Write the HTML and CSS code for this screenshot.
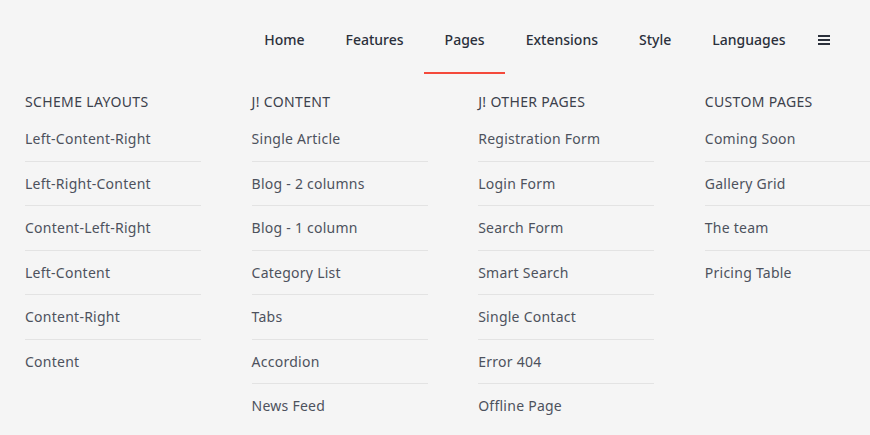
FILE: index.html
```html
<!DOCTYPE html>
<html lang="en">
<head>
    <meta charset="UTF-8">
    <title>Pages menu</title>
    <link rel="stylesheet" href="styles.css">
</head>
<body>
    <!-- barra de navegação -->
    <header class="topbar">
        <nav class="nav">
            <a href="#">Home</a>
            <a href="#">Features</a>
            <a href="#" class="active">Pages</a>
            <a href="#">Extensions</a>
            <a href="#">Style</a>
            <a href="#">Languages</a>
            <span class="burger"><i></i><i></i><i></i></span>
        </nav>
    </header>

    <!-- mega menu -->
    <div class="mega">
        <div class="col">
            <h4>Scheme Layouts</h4>
            <a href="#">Left-Content-Right</a>
            <a href="#">Left-Right-Content</a>
            <a href="#">Content-Left-Right</a>
            <a href="#">Left-Content</a>
            <a href="#">Content-Right</a>
            <a href="#">Content</a>
        </div>
        <div class="col">
            <h4>J! Content</h4>
            <a href="#">Single Article</a>
            <a href="#">Blog - 2 columns</a>
            <a href="#">Blog - 1 column</a>
            <a href="#">Category List</a>
            <a href="#">Tabs</a>
            <a href="#">Accordion</a>
            <a href="#">News Feed</a>
        </div>
        <div class="col">
            <h4>J! Other Pages</h4>
            <a href="#">Registration Form</a>
            <a href="#">Login Form</a>
            <a href="#">Search Form</a>
            <a href="#">Smart Search</a>
            <a href="#">Single Contact</a>
            <a href="#">Error 404</a>
            <a href="#">Offline Page</a>
        </div>
        <div class="col">
            <h4>Custom Pages</h4>
            <a href="#">Coming Soon</a>
            <a href="#">Gallery Grid</a>
            <a href="#">The team</a>
            <a href="#">Pricing Table</a>
        </div>
    </div>
</body>
</html>
```
FILE: styles.css
```css
/* base */
body { margin: 0; background: #f5f5f5; font-family: "Noto Sans", "Open Sans", sans-serif; color: #4d525d; overflow: hidden; }
a { text-decoration: none; color: inherit; }

/* nav */
.topbar { height: 80px; display: flex; justify-content: flex-end; padding-right: 40px; }
.nav { display: flex; align-items: stretch; height: 74px; }
.nav a { display: flex; align-items: center; padding: 6px 20.5px 0; font-size: 14px; font-weight: 500; color: #2b303b; border-bottom: 2px solid transparent; }
.nav a.active { border-bottom-color: #f4493b; }
.burger { display: flex; flex-direction: column; justify-content: center; gap: 2px; margin-left: 12px; padding-top: 6px; }
.burger i { display: block; width: 12px; height: 2px; background: #2b303b; }

/* mega menu */
.mega { display: grid; grid-template-columns: repeat(4, 176px); column-gap: 50.6px; padding: 10px 0 0 25px; }
.col h4 { margin: 0; height: 27px; font-size: 14px; font-weight: 400; text-transform: uppercase; color: #3c414c; line-height: 24px; letter-spacing: 0.35px; }
.col a { display: block; height: 43.5px; line-height: 43.5px; font-size: 14px; border-bottom: 1px solid #e3e3e3; letter-spacing: 0.25px; }
.col a:last-child { border-bottom: none; }
```
